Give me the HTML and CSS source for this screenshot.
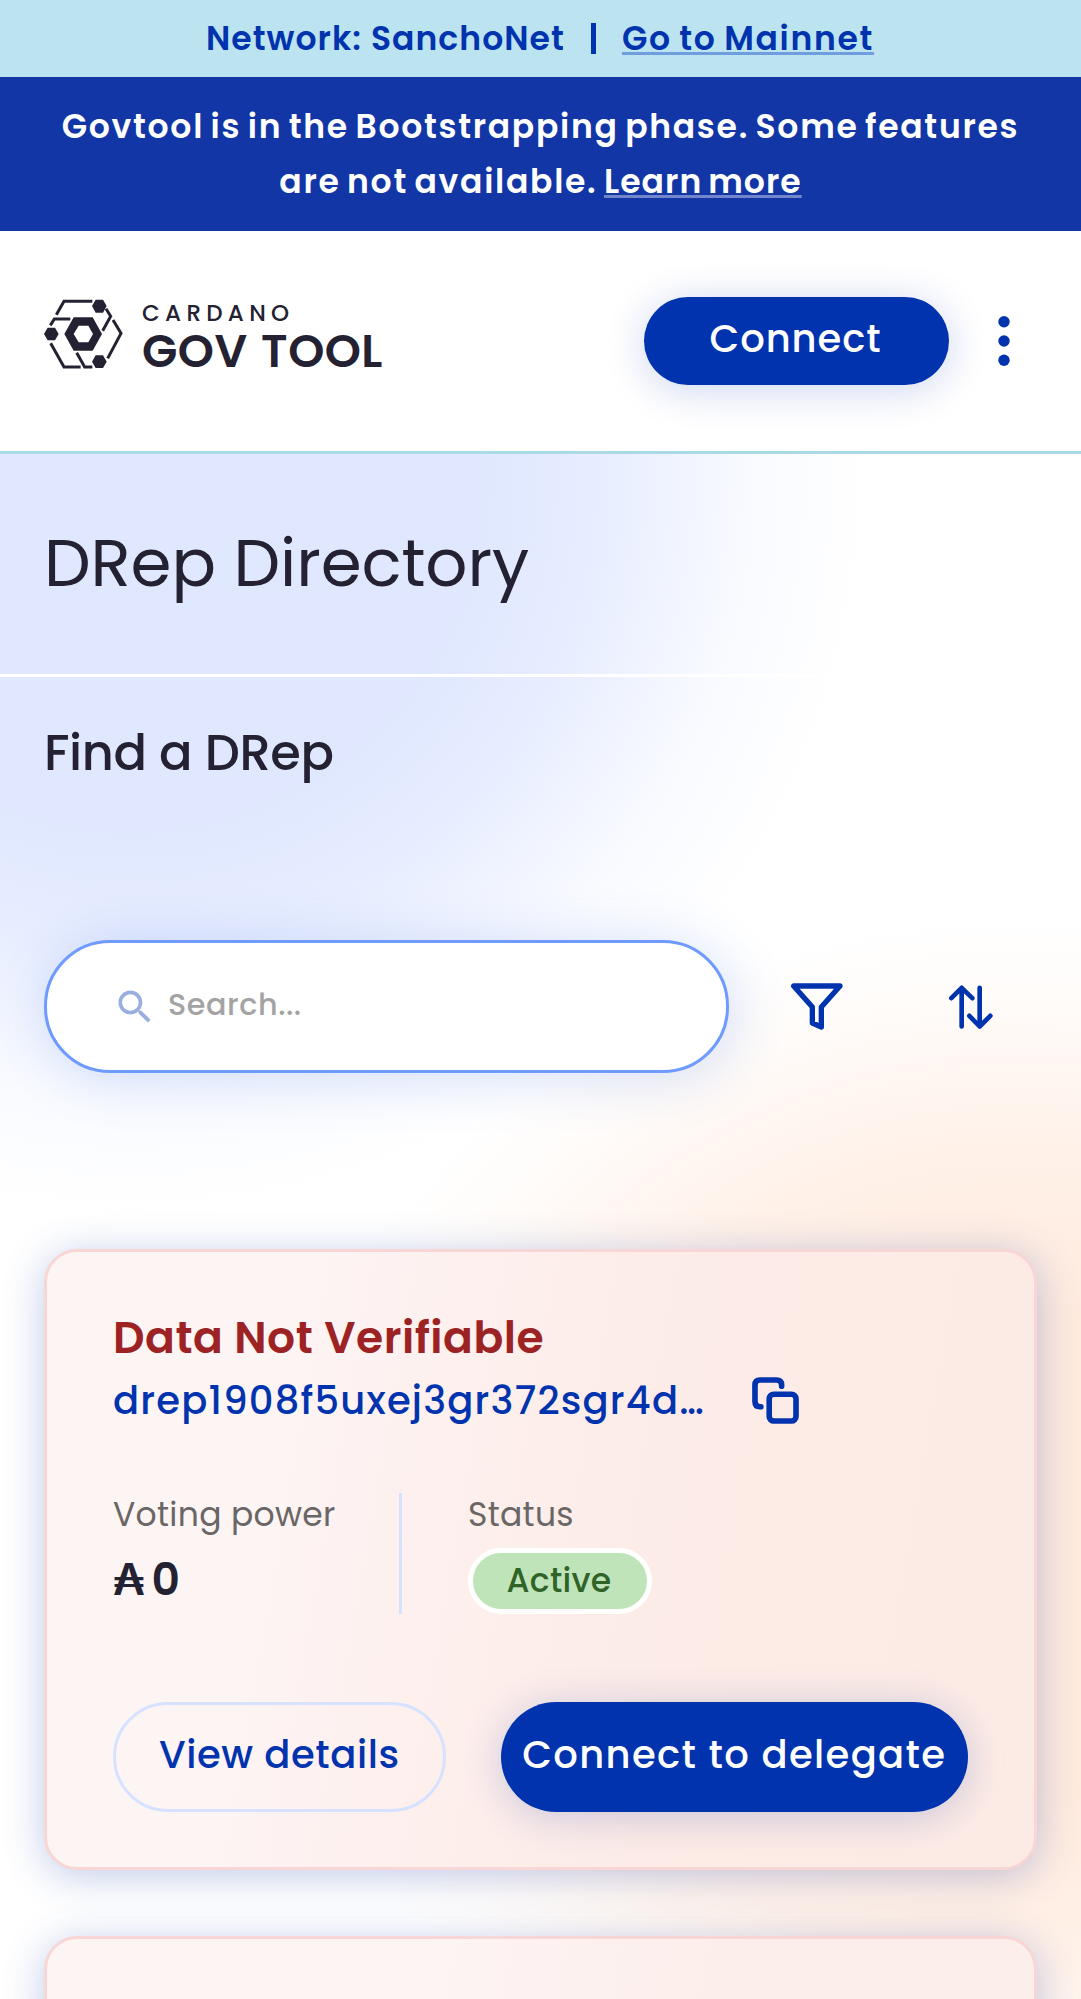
FILE: index.html
```html
<!DOCTYPE html>
<html lang="en">
<head>
<meta charset="utf-8">
<title>DRep Directory</title>
<link rel="stylesheet" href="styles.css">
</head>
<body>
<div class="network-bar">
  <span class="network-name">Network: SanchoNet</span>
  <span class="network-sep"></span>
  <a class="network-link">Go to Mainnet</a>
</div>
<div class="phase-bar">
  <div class="phase-line">Govtool is in the Bootstrapping phase. Some features</div>
  <div class="phase-line">are not available. <a class="phase-link">Learn more</a></div>
</div>
<header class="header">
  <div class="logo">
    <svg class="logo-mark" viewBox="42 57 237 210" fill="#242232">
      <path fill-rule="evenodd" d="M103 162L131 112H188L216 162L188 212H131ZM131 162L146 187H175L189 162L175 137H146Z"/>
      <path d="M186 78L197 59H219L230 78L219 98H197ZM42 162L53 143H75L86 162L75 181H53ZM186 245L197 226H219L230 245L219 264H197Z"/>
      <path fill="none" stroke="#242232" stroke-width="9" d="M79 104L102 64H187M61 136L73 117H121M228 86L242 109L218 152M249 120L273 160L233 235M62 190L102 261H152M140 218L164 261H187"/>
    </svg>
    <div class="logo-text">
      <span class="logo-top">CARDANO</span>
      <span class="logo-name">GOV TOOL</span>
    </div>
  </div>
  <div class="header-actions">
    <button class="btn btn-primary btn-connect">Connect</button>
    <svg class="kebab" viewBox="0 0 12 52" fill="#0033ad"><circle cx="6" cy="6.700" r="5.700"/><circle cx="6" cy="26" r="5.700"/><circle cx="6" cy="45.300" r="5.700"/></svg>
  </div>
</header>
<main class="main">
  <div class="page-title"><h1>DRep Directory</h1></div>
  <div class="content">
    <h2>Find a DRep</h2>
    <div class="toolbar">
      <div class="search">
        <svg class="search-icon" viewBox="0 0 24 24" fill="#99addf"><path d="M15.500 14h-.790l-.280-.270C15.410 12.590 16 11.110 16 9.500 16 5.910 13.090 3 9.500 3S3 5.910 3 9.500 5.910 16 9.500 16c1.610 0 3.090-.590 4.230-1.570l.270.280v.790l5 4.990L20.490 19l-4.990-5zm-6 0C7.010 14 5 11.990 5 9.500S7.010 5 9.500 5 14 7.010 14 9.500 11.990 14 9.500 14z"/></svg>
        <span class="search-text">Search...</span>
      </div>
      <svg class="filter" viewBox="153 129 156 141" fill="none" stroke="#0033ad" stroke-width="16" stroke-linejoin="round"><path d="M161 138H300L244 201V261L217 249V201Z"/></svg>
      <svg class="sort" viewBox="627 134 132 131" fill="none" stroke="#0033ad" stroke-width="14" stroke-linecap="round" stroke-linejoin="round"><path d="M665 258V142M634 173L665 142L697 173M719 142V258M688 226L719 258L751 226"/></svg>
    </div>
    <article class="card">
      <h3>Data Not Verifiable</h3>
      <div class="drep-id">
        <span>drep1908f5uxej3gr372sgr4d…</span>
        <svg class="copy" viewBox="576 438 142 142" fill="none" stroke="#0033ad" stroke-width="17" stroke-linecap="round"><rect x="628" y="490" width="81" height="81" rx="14"/><path d="M665.500 466V462Q665.500 447 650 447H600Q585 447 585 462V512Q585 528 600 528H603"/></svg>
      </div>
      <div class="stats">
        <div class="stat power"><span class="label">Voting power</span><span class="value">₳ 0</span></div>
        <div class="stat status"><span class="label">Status</span><span class="pill">Active</span></div>
      </div>
      <div class="actions">
        <button class="btn btn-outline">View details</button>
        <button class="btn btn-primary btn-delegate">Connect to delegate</button>
      </div>
    </article>
    <article class="card card-next"></article>
  </div>
</main>
</body>
</html>
```
FILE: styles.css
```css
* { box-sizing: border-box; margin: 0; padding: 0; }
body {
  height: 1999px;
  overflow: hidden;
  display: flex;
  flex-direction: column;
  font-family: Poppins, Inter, "Liberation Sans", sans-serif;
  color: #242232;
  background: #fff;
  white-space: nowrap;
}
svg { display: block; flex: none; overflow: visible; }

.network-bar {
  flex: none;
  height: 77px;
  display: flex;
  align-items: center;
  padding-left: 206px;
  background: #bce4f0;
  color: #0033ad;
  font-size: 33px;
  font-weight: 600;
}
.network-name { width: 385px; letter-spacing: 1.05px; }
.network-sep { width: 5px; height: 31px; background: #0033ad; }
.network-link {
  margin-left: 26px;
  letter-spacing: 1.7px;
  word-spacing: -2px;
  text-decoration: underline 3px #6f9ddd;
  text-underline-offset: 2px;
  text-decoration-skip-ink: none;
}
.phase-bar {
  flex: none;
  height: 154px;
  padding-top: 22px;
  background: #1236a6;
  color: #fff;
  text-align: center;
  font-size: 33px;
  font-weight: 600;
}
.phase-line { line-height: 55px; letter-spacing: 1.72px; word-spacing: -3px; }
.phase-link {
  letter-spacing: 1.05px;
  text-decoration: underline 3px #7486cb;
  text-underline-offset: 2px;
  text-decoration-skip-ink: none;
}

.header {
  flex: none;
  height: 223px;
  padding: 66px 71px 0 44px;
  display: flex;
  justify-content: space-between;
  align-items: flex-start;
  border-bottom: 3px solid #a9dae6;
}
.logo { display: flex; gap: 19px; padding-top: 2px; }
.logo-mark { width: 79px; height: 70px; }
.logo-text { display: flex; flex-direction: column; }
.logo-top { font-size: 23px; line-height: 29px; font-weight: 500; letter-spacing: 5.300px; }
.logo-name { font-size: 46px; line-height: 46px; font-weight: 600; letter-spacing: .5px; word-spacing: 2px; }
.header-actions { display: flex; align-items: center; }
.kebab { width: 12px; height: 52px; margin-left: 49px; }

.btn {
  border: 0;
  font-family: inherit;
  font-weight: 500;
  border-radius: 55px;
  padding-bottom: 5px;
  text-align: center;
  white-space: nowrap;
}
.btn-primary {
  background: #0033ad;
  color: #fff;
  box-shadow: 0 5px 40px rgba(0, 51, 173, .2);
}
.btn-connect { width: 305px; height: 88px; padding-right: 2px; font-size: 38.500px; letter-spacing: .9px; }

.main {
  flex: 1;
  min-height: 0;
  overflow: hidden;
  background:
    radial-gradient(ellipse 740px 740px at 130px 20px, #e0e8ff 0, #e0e8ff 48%, rgba(224, 232, 255, .75) 64%, rgba(224, 232, 255, .2) 84%, rgba(224, 232, 255, 0) 100%),
    radial-gradient(ellipse 740px 640px at 1020px 1100px, #ffeadd 0, #ffeadd 36%, rgba(255, 234, 221, .65) 64%, rgba(255, 234, 221, .18) 86%, rgba(255, 234, 221, 0) 100%),
    #fff;
}
.page-title { height: 223px; padding: 65px 44px 0; border-bottom: 3px solid #fff; }
h1 { font-size: 66px; line-height: 88px; font-weight: 400; letter-spacing: -.1px; }
.content { padding: 0 44px; }
h2 { padding-top: 43px; font-size: 49.500px; line-height: 66px; font-weight: 500; letter-spacing: -.4px; }
.toolbar { display: flex; align-items: center; margin-top: 154px; }
.search {
  width: 685px;
  height: 133px;
  display: flex;
  align-items: center;
  padding-left: 66px;
  border: 3px solid #6f9bff;
  border-radius: 66px;
  background: #fff;
  color: #a3a3a3;
  font-size: 30.250px;
  font-weight: 500;
  letter-spacing: .55px;
  box-shadow: 5px 5px 55px rgba(47, 98, 220, .2);
}
.search-icon { width: 44px; height: 44px; margin-right: 11px; }
.search-text { padding-bottom: 3px; }
.filter { width: 52px; height: 47px; margin-left: 62px; }
.sort { width: 44px; height: 44px; margin-left: 106px; }

.card {
  height: 621px;
  margin-top: 176px;
  padding: 55px 66px 0;
  border: 3px solid #f8d6d5;
  border-radius: 33px;
  background: #fdf4f4 linear-gradient(100deg, #fdf4f4 24%, #fdefec 44%, #fcebe6 66%, #fcebe5 100%);
  box-shadow: 0 6px 40px rgba(47, 83, 180, .3);
}
.card-next {
  margin-top: 66px;
  background: #fdf4f4 linear-gradient(100deg, #fdf4f4 35%, #fceeea 65%, #fceeea 100%);
}
h3 { font-size: 44px; line-height: 62px; font-weight: 600; letter-spacing: .5px; color: #9c2224; }
.drep-id {
  height: 62px;
  display: flex;
  align-items: center;
  color: #0033ad;
  font-size: 38.500px;
  font-weight: 500;
  letter-spacing: 1.2px;
}
.drep-id span { width: 639px; }
.copy { width: 47px; height: 47px; }
.stats { display: flex; margin-top: 62px; height: 121px; }
.stat { display: flex; flex-direction: column; }
.power { width: 289px; border-right: 3px solid #d6e2ff; }
.status { padding-left: 66px; }
.label { font-size: 33px; line-height: 44px; letter-spacing: .3px; color: #6a6665; }
.value { margin-top: 13px; font-size: 44px; line-height: 60px; font-weight: 600; word-spacing: -4px; }
.pill {
  margin-top: 11px;
  width: 184px;
  height: 66px;
  padding-right: 2px;
  border: 5px solid #fff;
  border-radius: 33px;
  background: #c0e4ba;
  color: #2f6327;
  font-size: 33px;
  line-height: 56px;
  font-weight: 500;
  letter-spacing: .3px;
  text-align: center;
}
.actions { display: flex; gap: 55px; margin-top: 88px; }
.actions .btn { height: 110px; font-size: 38.500px; }
.actions .btn-outline { width: 333px; border: 3px solid #d6e2ff; background: transparent; color: #0033ad; letter-spacing: .6px; }
.actions .btn-delegate { width: 468px; letter-spacing: 1.350px; }
```
